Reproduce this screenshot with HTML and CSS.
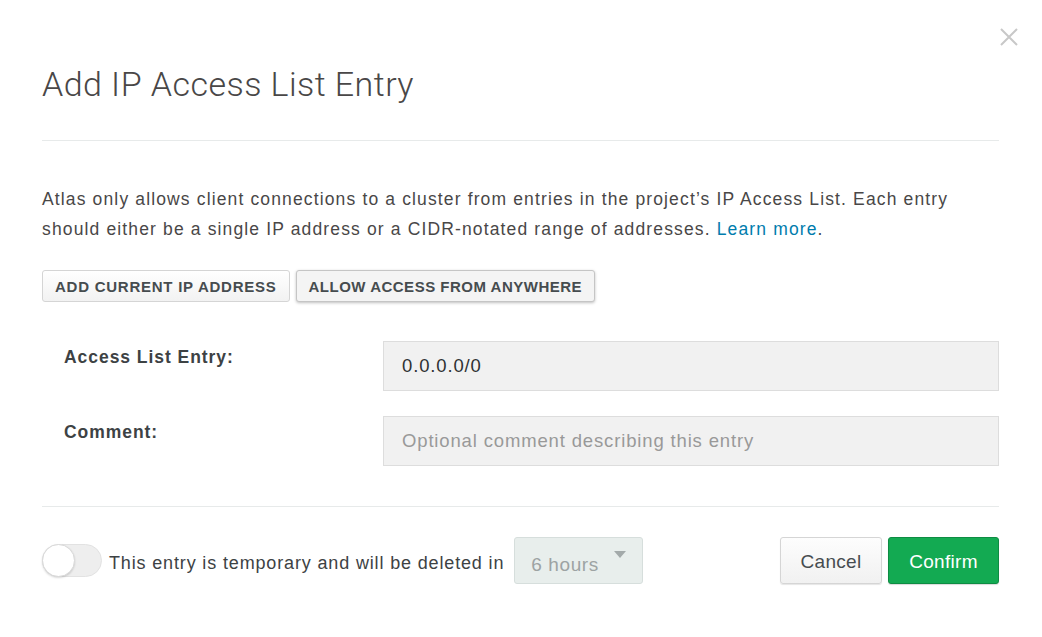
FILE: index.html
```html
<!DOCTYPE html>
<html>
<head>
<meta charset="utf-8">
<link rel="stylesheet" href="styles.css">
</head>
<body>
<div class="modal">
  <button class="close" aria-label="Close">
    <svg width="18" height="18" viewBox="0 0 18 18"><path d="M1 1L17 17M17 1L1 17" stroke="#c8c8c8" stroke-width="2" fill="none"/></svg>
  </button>
  <header class="head">
    <h1 class="title">Add IP Access List Entry</h1>
  </header>
  <section class="body">
    <p class="desc">Atlas only allows client connections to a cluster from entries in the project’s IP Access List. Each entry should either be a single IP address or a CIDR-notated range of addresses. <a class="link" href="#">Learn more</a>.</p>
    <div class="quick">
      <button class="qbtn">ADD CURRENT IP ADDRESS</button>
      <button class="qbtn active">ALLOW ACCESS FROM ANYWHERE</button>
    </div>
    <div class="form">
      <div class="row">
        <label class="label">Access List Entry:</label>
        <div class="input">0.0.0.0/0</div>
      </div>
      <div class="row">
        <label class="label">Comment:</label>
        <div class="input placeholder">Optional comment describing this entry</div>
      </div>
    </div>
  </section>
  <footer class="foot">
    <div class="temp">
      <span class="toggle"><span class="knob"></span></span>
      <span class="temp-text">This entry is temporary and will be deleted in</span>
      <span class="select">6 hours<span class="caret"></span></span>
    </div>
    <div class="actions">
      <button class="btn cancel">Cancel</button>
      <button class="btn confirm">Confirm</button>
    </div>
  </footer>
</div>
</body>
</html>
```
FILE: styles.css
```css
* { box-sizing: border-box; }
html, body { margin: 0; padding: 0; background: #fff; }
body {
  font-family: "Liberation Sans", Arial, sans-serif;
  color: #494747;
  width: 1042px;
  height: 637px;
  overflow: hidden;
}
.modal {
  position: relative;
  padding: 0 43px 0 42px;
}
.close {
  position: absolute;
  top: 28px;
  right: 24px;
  border: 0;
  background: none;
  padding: 0;
  width: 18px;
  height: 18px;
  cursor: pointer;
}
.close svg { display: block; }
.head {
  padding-top: 62px;
  height: 141px;
  border-bottom: 1px solid #e7eaea;
}
.title {
  margin: 0;
  font-family: Roboto, "Liberation Sans", sans-serif;
  font-weight: 300;
  font-size: 34px;
  line-height: 44px;
  color: #494747;
  letter-spacing: 0.45px;
}
.body {
  padding-top: 43px;
  border-bottom: 1px solid #e7eaea;
  padding-bottom: 40px;
}
.desc {
  margin: 0;
  font-size: 17.5px;
  line-height: 30px;
  letter-spacing: 1.14px;
  color: #494747;
}
.link { color: #007cad; text-decoration: none; }
.quick {
  display: flex;
  gap: 6px;
  margin-top: 26px;
}
.qbtn {
  font-family: "Liberation Sans", Arial, sans-serif;
  font-size: 15px;
  font-weight: bold;
  letter-spacing: 0.75px;
  color: #464c4f;
  height: 32px;
  padding: 0 12px;
  border: 1px solid #d5d5d5;
  border-radius: 3px;
  background: linear-gradient(#fff, #f2f2f2);
}
.qbtn.active {
  letter-spacing: 0.5px;
  background: #f4f4f4;
  border-color: #c5c5c5;
  box-shadow: 0 1px 3px rgba(0,0,0,0.25);
}
.form {
  margin-top: 39px;
  display: flex;
  flex-direction: column;
  gap: 25px;
}
.row {
  display: flex;
  align-items: flex-start;
}
.label {
  width: 341px;
  padding-left: 22px;
  padding-top: 4px;
  font-size: 17.5px;
  font-weight: bold;
  letter-spacing: 0.95px;
  color: #3d4244;
  line-height: 24px;
}
.input {
  flex: 1;
  height: 50px;
  background: #f1f1f1;
  border: 1px solid #dddddd;
  padding: 0 18px;
  display: flex;
  align-items: center;
  font-size: 18.5px;
  letter-spacing: 0.85px;
  color: #2f3233;
}
.input.placeholder { color: #999; }
.foot {
  display: flex;
  justify-content: space-between;
  align-items: center;
  padding-top: 30px;
}
.temp {
  display: flex;
  align-items: center;
}
.toggle {
  width: 60px;
  height: 33px;
  border-radius: 17px;
  background: #eeeeee;
  border: 1px solid #e2e2e2;
  position: relative;
  display: inline-block;
}
.knob {
  position: absolute;
  left: -1px;
  top: -1px;
  width: 33px;
  height: 33px;
  border-radius: 50%;
  background: #fff;
  border: 1px solid #d9d9d9;
  box-shadow: 0 1px 2px rgba(0,0,0,0.15);
}
.temp-text {
  margin-left: 7px;
  padding-top: 6px;
  font-size: 18px;
  letter-spacing: 0.85px;
  color: #3d4244;
}
.select {
  margin-left: 10px;
  width: 129px;
  height: 47px;
  background: #e8eeec;
  border: 1px solid #d6dedc;
  border-radius: 3px;
  position: relative;
  padding: 16px 0 0 16px;
  font-size: 19px;
  letter-spacing: 0.6px;
  color: #9da3a3;
  display: inline-block;
}
.caret {
  position: absolute;
  right: 16px;
  top: 13px;
  width: 0;
  height: 0;
  border-left: 6px solid transparent;
  border-right: 6px solid transparent;
  border-top: 7px solid #a3aaaa;
}
.actions {
  display: flex;
  gap: 6px;
}
.btn {
  height: 47px;
  border-radius: 3px;
  padding-top: 3px;
  font-family: "Liberation Sans", Arial, sans-serif;
  font-size: 19px;
  letter-spacing: 0.3px;
}
.cancel {
  width: 102px;
  background: linear-gradient(#fdfdfd, #f1f1f1);
  border: 1px solid #d5d5d5;
  color: #464c4f;
  box-shadow: 0 1px 1px rgba(0,0,0,0.1);
}
.confirm {
  width: 111px;
  background: #13aa52;
  border: 1px solid #0e8c43;
  color: #fff;
  box-shadow: 0 1px 1px rgba(0,0,0,0.15);
}
```
